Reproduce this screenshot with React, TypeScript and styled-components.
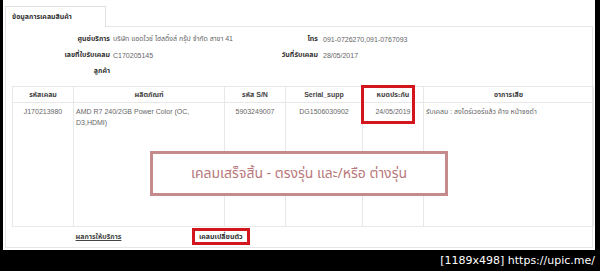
import React from 'react';
import styled, { createGlobalStyle } from 'styled-components';

const GlobalStyle = createGlobalStyle`
  html, body {
    margin: 0;
    padding: 0;
    background: #000;
  }
  body {
    font-family: "Liberation Sans", "Noto Sans Thai", "Noto Sans", sans-serif;
  }
`;

const Page = styled.div`
  width: 600px;
  height: 271px;
  background: #000;
  display: flex;
  flex-direction: column;
`;

const Sheet = styled.div`
  margin-left: 3px;
  width: 592px;
  height: 250px;
  flex-shrink: 0;
  box-sizing: border-box;
  background: #fff;
  padding: 6px 2px 2px 2px;
  display: flex;
  flex-direction: column;
  overflow: hidden;
`;

const TabBar = styled.div`
  display: flex;
`;

const Tab = styled.div`
  width: 101px;
  height: 21px;
  box-sizing: border-box;
  border: 1px solid #e0e0e0;
  border-bottom: none;
  background: #fff;
  margin-bottom: -1px;
  position: relative;
  z-index: 1;
  display: flex;
  align-items: center;
  padding-left: 6px;
  font-size: 7px;
  font-weight: 700;
  color: #333;
`;

const Panel = styled.div`
  flex: 1;
  border: 1px solid #e6e6e6;
  padding: 4px 5px 0 6px;
  display: flex;
  flex-direction: column;
`;

const InfoGrid = styled.div`
  display: grid;
  grid-template-columns: 98px 137px 65px 1fr;
  grid-auto-rows: 16px;
  column-gap: 3px;
  align-items: center;
  font-size: 7px;
`;

const Label = styled.div`
  text-align: right;
  font-weight: 700;
  color: #333;
`;

const Value = styled.div<{ $pad?: number }>`
  color: #666;
  padding-left: ${p => p.$pad ?? 0}px;
  white-space: nowrap;
`;

const TableWrap = styled.div`
  position: relative;
  margin-top: 7px;
`;

const Table = styled.table`
  width: 575px;
  border-collapse: collapse;
  table-layout: fixed;
  font-size: 7px;
`;

const Th = styled.th<{ $w: number }>`
  width: ${p => p.$w}px;
  height: 15px;
  padding: 0;
  border: 1px solid #e8e8e8;
  font-weight: 700;
  color: #444;
  text-align: center;
`;

const Td = styled.td<{ $align?: string }>`
  height: 120px;
  padding: 3px 2px 0;
  vertical-align: top;
  border: 1px solid #e8e8e8;
  color: #666;
  line-height: 11px;
  text-align: ${p => p.$align ?? 'center'};
`;

const WarrantyMark = styled.div`
  position: absolute;
  left: 349px;
  top: -1px;
  width: 54px;
  height: 39px;
  box-sizing: border-box;
  border: 3px solid #d3151d;
`;

const Note = styled.div`
  position: absolute;
  left: 138px;
  top: 65px;
  width: 298px;
  height: 45px;
  box-sizing: border-box;
  border: 3px solid #c48a8c;
  background: #fff;
  display: flex;
  align-items: center;
  justify-content: center;
  color: #b9787b;
  font-family: "Noto Sans Thai", "Noto Sans", sans-serif;
  font-size: 14px;
`;

const ResultRow = styled.div`
  display: flex;
  align-items: center;
  height: 19px;
  font-size: 7px;
`;

const ResultLabel = styled.div`
  width: 173px;
  text-align: center;
  font-weight: 700;
  color: #444;
  text-decoration: underline;
`;

const ResultValue = styled.div`
  margin-left: 7px;
  height: 17px;
  box-sizing: border-box;
  border: 3px solid #d3151d;
  padding: 0 4px;
  display: flex;
  align-items: center;
  font-weight: 700;
  color: #333;
`;

const Footer = styled.div`
  flex: 1;
  display: flex;
  align-items: center;
  justify-content: flex-end;
  padding-right: 5px;
  color: #fff;
  font-family: "DejaVu Sans", sans-serif;
  font-size: 11px;
`;

export default function App() {
  return (
    <>
      <GlobalStyle />
      <Page>
        <Sheet>
          <TabBar>
            <Tab>ข้อมูลการเคลมสินค้า</Tab>
          </TabBar>
          <Panel>
            <InfoGrid>
              <Label>ศูนย์บริการ</Label>
              <Value>บริษัท แอดไวซ์ โฮลดิ้งส์ กรุ๊ป จำกัด สาขา 41</Value>
              <Label>โทร</Label>
              <Value $pad={2}>091-0726270,091-0767093</Value>
              <Label>เลขที่ใบรับเคลม</Label>
              <Value>C170205145</Value>
              <Label>วันที่รับเคลม</Label>
              <Value $pad={2}>28/05/2017</Value>
              <Label>ลูกค้า</Label>
              <Value />
            </InfoGrid>
            <TableWrap>
              <Table>
                <thead>
                  <tr>
                    <Th $w={60}>รหัสเคลม</Th>
                    <Th $w={150}>ผลิตภัณฑ์</Th>
                    <Th $w={60}>รหัส S/N</Th>
                    <Th $w={76}>Serial_supp</Th>
                    <Th $w={60}>หมดประกัน</Th>
                    <Th $w={169}>อาการเสีย</Th>
                  </tr>
                </thead>
                <tbody>
                  <tr>
                    <Td>J170213980</Td>
                    <Td $align="left">AMD R7 240/2GB Power Color (OC,<br />D3,HDMI)</Td>
                    <Td>5903249007</Td>
                    <Td>DG1506030902</Td>
                    <Td>24/05/2019</Td>
                    <Td $align="left">รับเคลม : ลงไดร์เวอร์แล้ว ค้าง หน้าจอดำ</Td>
                  </tr>
                </tbody>
              </Table>
              <WarrantyMark />
              <Note>เคลมเสร็จสิ้น - ตรงรุ่น และ/หรือ ต่างรุ่น</Note>
            </TableWrap>
            <ResultRow>
              <ResultLabel>ผลการให้บริการ</ResultLabel>
              <ResultValue>เคลมเปลี่ยนตัว</ResultValue>
            </ResultRow>
          </Panel>
        </Sheet>
        <Footer>[1189x498] https://upic.me/</Footer>
      </Page>
    </>
  );
}
